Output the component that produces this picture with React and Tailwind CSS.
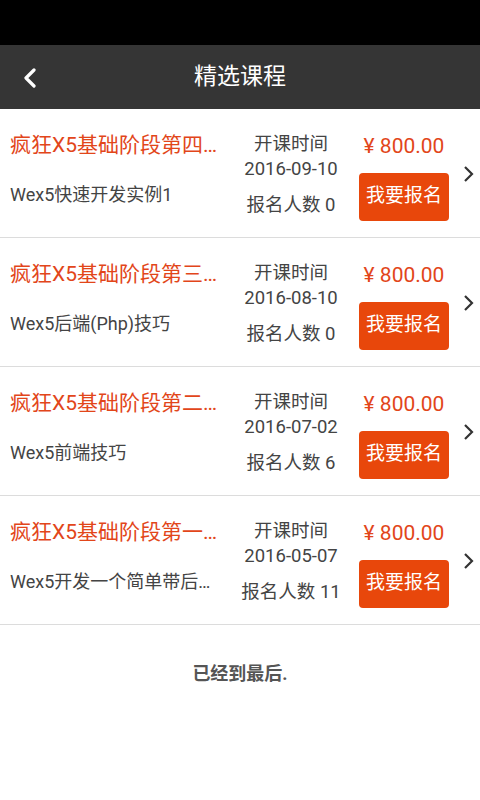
import React from "react";

const courses = [
  { title: "疯狂X5基础阶段第四课：Wex5快速开发实例", sub: "Wex5快速开发实例1", date: "2016-09-10", count: 0 },
  { title: "疯狂X5基础阶段第三课：Wex5后端技巧", sub: "Wex5后端(Php)技巧", date: "2016-08-10", count: 0 },
  { title: "疯狂X5基础阶段第二课：Wex5前端技巧", sub: "Wex5前端技巧", date: "2016-07-02", count: 6 },
  { title: "疯狂X5基础阶段第一课：Wex5开发入门", sub: "Wex5开发一个简单带后台的应用", date: "2016-05-07", count: 11 },
];

const font = { fontFamily: '"Roboto", "Noto Sans CJK SC", sans-serif' };

export default function App() {
  return (
    <div className="w-[480px] h-[800px] bg-white flex flex-col" style={font}>
      <div className="h-[45px] bg-black" />
      <div className="h-[64px] bg-[#353535] flex items-center relative">
        <svg className="absolute left-[22px] top-[23px]" width="16" height="20" viewBox="0 0 16 20">
          <path d="M12 2 L4 10 L12 18" fill="none" stroke="white" strokeWidth="3.2" strokeLinecap="round" strokeLinejoin="round" />
        </svg>
        <div className="flex-1 text-center text-white text-[23px]">精选课程</div>
      </div>
      <div className="flex flex-col">
        {courses.map((c, i) => (
          <div key={i} className="h-[129px] border-b border-[#dcdcdc] flex items-center">
            <div className="w-[222px] pl-[10px] pr-[1px] flex flex-col gap-[23px] pb-[7px] overflow-hidden">
              <div className="text-[21px] text-[#e2461a] truncate leading-[28px]">{c.title}</div>
              <div className="text-[18px] text-[#444] truncate leading-[26px]">{c.sub}</div>
            </div>
            <div className="w-[138px] flex flex-col items-center text-[#444] pt-[3px]">
              <div className="text-[18.5px] leading-[27px]">开课时间</div>
              <div className="text-[18.5px] leading-[23px]">{c.date}</div>
              <div className="text-[18.5px] leading-[27px] mt-[11px]">报名人数 {c.count}</div>
            </div>
            <div className="w-[90px] flex flex-col items-center ml-[-1px] pt-[6px]">
              <div className="text-[21px] text-[#e2461a] leading-[28px] whitespace-nowrap">¥ 800.00</div>
              <div className="mt-[13px] w-[90px] h-[48px] rounded-[4px] bg-[#e8470b] text-white text-[19px] flex items-center justify-center">我要报名</div>
            </div>
            <div className="flex-1 flex justify-center pl-[6px] pt-[2px]">
              <svg width="12" height="18" viewBox="0 0 12 18">
                <path d="M3 2 L10 9 L3 16" fill="none" stroke="#333" strokeWidth="2.2" />
              </svg>
            </div>
          </div>
        ))}
      </div>
      <div className="text-center text-[18px] font-bold text-[#555] mt-[35px]">已经到最后.</div>
    </div>
  );
}
